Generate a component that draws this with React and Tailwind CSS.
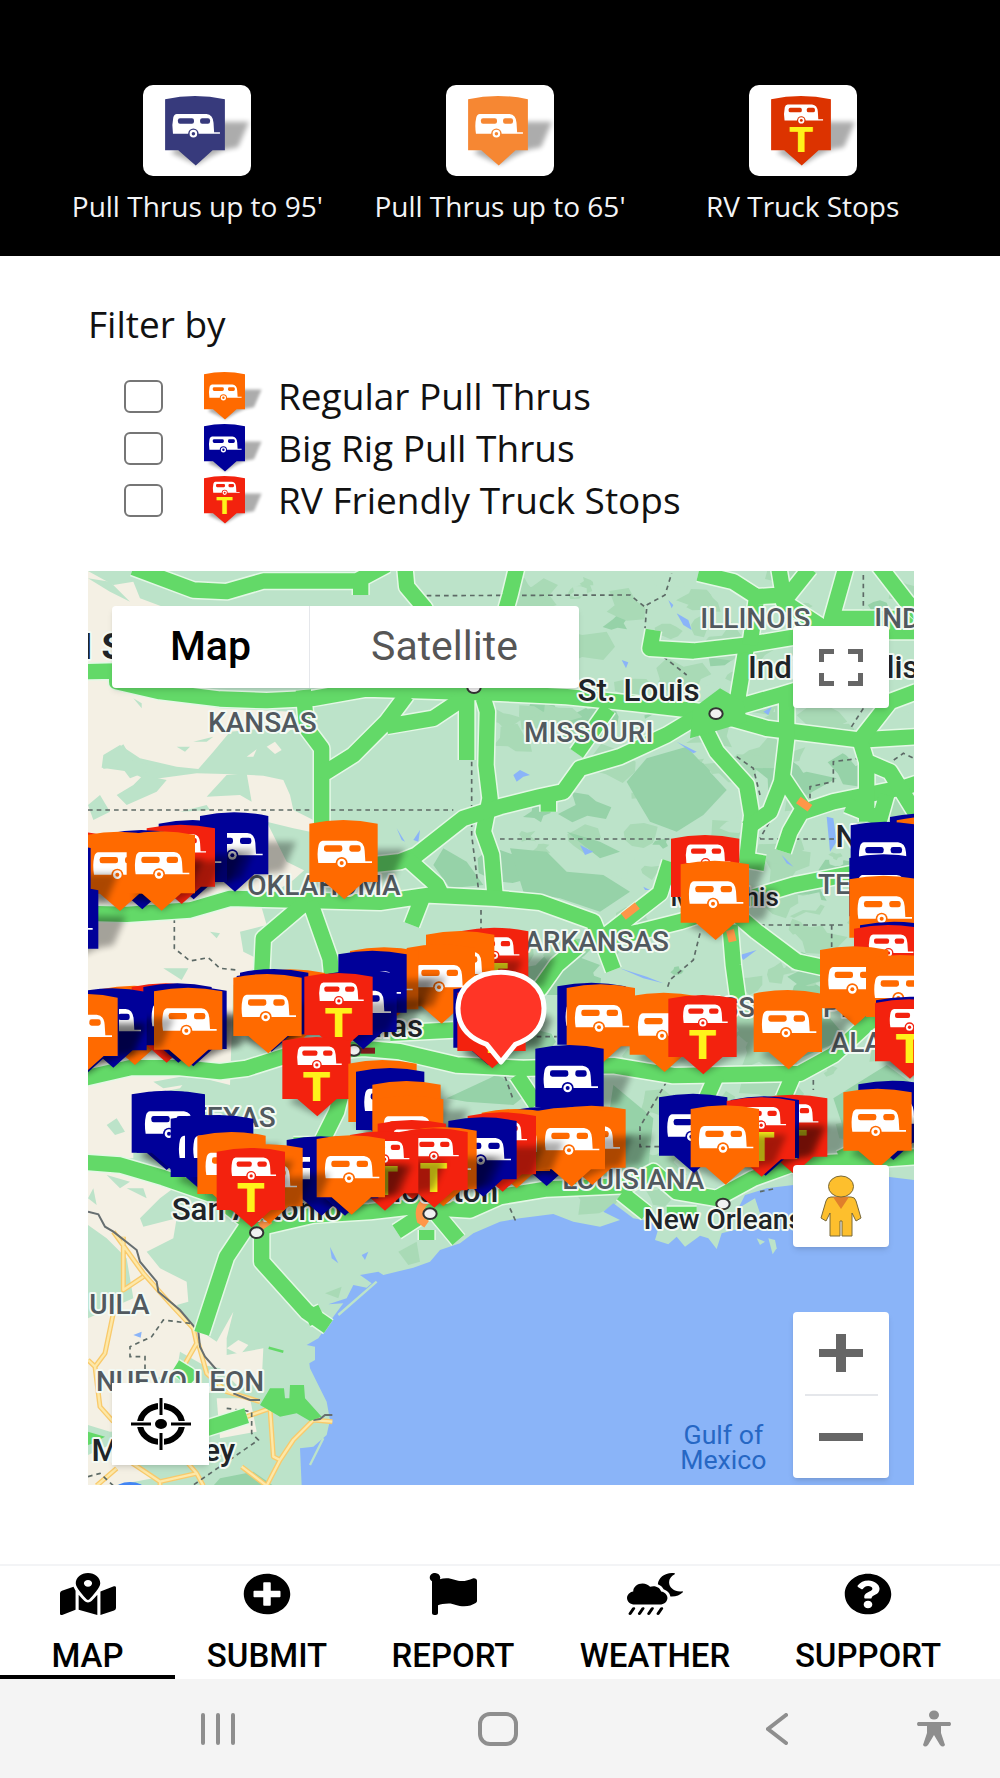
import React from 'react';
import { FaMapMarkedAlt, FaPlusCircle, FaFlag, FaCloudMoonRain, FaQuestionCircle } from 'react-icons/fa';

const COLORS = { O: '#ff6a00', B: '#000099', R: '#f3220e' };

function Camper({ color }) {
  return (
    <g>
      <path d="M40 62H142Q164 64 166 92L168 124H188V129H27Q22 100 28 74Q31 63 40 62Z" fill="#fff" />
      <rect x="44" y="76" width="55" height="19" rx="7" fill={color} />
      <rect x="120" y="76" width="34" height="19" rx="7" fill={color} />
      <circle cx="97" cy="129" r="18" fill={color} />
      <circle cx="97" cy="129" r="13" fill="#fff" />
      <circle cx="97" cy="129" r="6" fill={color} />
    </g>
  );
}

function Marker({ type, x = 0, y = 0, color }) {
  const fill = color || COLORS[type];
  return (
    <g transform={`translate(${x} ${y})`}>
      <path d="M150 88H288L250 176L205 184L160 205L108 236L20 195Z" fill="#000" opacity="0.32" filter="url(#soft)" />
      <path d="M0 11Q102 -11 205 11V186H163L105 238L45 186H0Z" fill={fill} />
      {type === 'R' ? (
        <>
          <g transform="translate(24 -22) scale(.82)">
            <Camper color={fill} />
          </g>
          <text x="103" y="192" textAnchor="middle" fill="#fff21a" className="font-['DejaVu_Sans'] text-[118px] font-bold">
            T
          </text>
        </>
      ) : (
        <Camper color={fill} />
      )}
    </g>
  );
}

function MarkerIcon({ type, color, className }) {
  return (
    <svg viewBox="0 0 205 240" className={className} overflow="visible" aria-hidden="true">
      <Marker type={type} color={color} />
    </svg>
  );
}

const MARKERS = [
  ['R', -150, 797], ['B', 360, 742], ['B', 236, 765], ['R', 200, 779], ['B', 82, 795], ['O', 15, 800], ['O', 140, 799],
  ['B', -173, 838], ['B', -150, 965], ['O', 688, 765],
  ['R', 1773, 810], ['O', 1802, 887],
  ['B', 2430, 745], ['O', 2450, 755], ['B', 2312, 770], ['B', 2308, 868], ['O', 2308, 932], ['B', 2340, 1070],
  ['R', 2322, 1080], ['O', 2220, 1144], ['O', 2358, 1170], ['B', 2388, 1295], ['R', 2385, 1303],
  ['O', 60, 1262], ['R', 155, 1255], ['B', 190, 1255], ['B', 235, 1266], ['O', 222, 1268], ['B', -5, 1270], ['B', -88, 1290], ['O', -92, 1287],
  ['O', 530, 1213], ['B', 480, 1212], ['B', 470, 1222], ['O', 460, 1227],
  ['R', 1140, 1088], ['O', 1038, 1098], ['O', 980, 1138], ['O', 810, 1147], ['B', 775, 1157], ['B', 745, 1215],
  ['R', 673, 1224], ['R', 607, 1416],
  ['O', 805, 1485], ['B', 828, 1509], ['O', 877, 1548], ['O', 885, 1592],
  ['B', 1120, 1262], ['R', 1132, 1272],
  ['B', 1432, 1253], ['O', 1460, 1258], ['O', 1649, 1283], ['R', 1765, 1290], ['O', 2021, 1275],
  ['B', 1366, 1440], ['B', 1295, 1625], ['O', 1205, 1632], ['O', 1432, 1622], ['O', 1370, 1627],
  ['R', 1163, 1642], ['B', 1105, 1657], ['R', 893, 1665],
  ['O', 985, 1686], ['R', 958, 1690], ['R', 810, 1699], ['B', 620, 1714], ['B', 690, 1714], ['O', 710, 1711],
  ['B', 155, 1577], ['B', 170, 1577], ['B', 272, 1650], ['B', 315, 1650], ['O', 463, 1738], ['O', 352, 1701], ['R', 410, 1749],
  ['B', 1737, 1586], ['R', 2037, 1589], ['B', 1952, 1594], ['R', 1940, 1597], ['O', 1832, 1621],
  ['B', 2335, 1547], ['O', 2290, 1571],
];

const BEIGE = [
  '24,18 100,60 160,50 180,100 260,130 150,140 110,330 230,390 420,430 640,440 660,470 620,505 560,490 450,500 400,560 355,612 290,605 180,580 120,540 70,570 65,608 150,620 200,645 350,625 460,628 550,632 610,645 630,690 640,735 700,765 690,830 690,900 640,945 540,1010 560,1080 480,1100 490,1160 530,1180 520,1210 460,1260 450,1560 330,1530 300,1570 200,1590 160,1600 160,1780 24,1780 24,18',
  '24,1815 120,1810 200,1850 300,1855 240,1900 180,1960 190,1985 290,1960 280,2020 200,2060 240,2110 320,2150 325,2210 290,2220 350,2290 410,2330 460,2240 440,2320 440,2370 550,2350 545,2450 480,2470 420,2410 370,2400 300,2360 290,2420 230,2440 200,2500 250,2590 90,2600 24,2580 24,2260 160,2200 140,2080 80,2020 24,1980',
  '440,2350 475,2325 505,2340 480,2370', '24,2670 90,2640 220,2740 100,2762 24,2762', '410,2500 510,2500 530,2600 420,2620',
  '560,545 585,530 605,555 585,567', '500,575 530,553 520,575', '1690,1600 1720,1590 1735,1605', '1645,1690 1675,1665 1685,1695',
];

const PATCHES = [
  '160,400 185,415 185,430', '70,580 130,538 160,590 240,605 150,640 120,600 70,612', '340,530 400,515 380,530', '290,545 330,545 315,560',
  '190,630 260,645 230,680 140,720 110,690 160,660', '440,630 500,625 515,710 480,690 380,695', '24,720 60,690 90,740 40,765',
  '300,740 380,720 390,735', '560,770 640,790 690,800 690,925 620,890', '250,1210 325,1210 305,1245', '80,1680 110,1660 135,1700 105,1710',
  '24,40 90,50 150,110 90,80', '80,1830 150,1850 120,1870', '220,1550 330,1530 310,1560 250,1570', '390,1100 420,1105 410,1120',
  '140,1870 190,1870 200,1900', '40,1870 50,1920 24,1900',
];

const DARK = [
  '1640,650 1700,580 1820,545 1940,675 1870,750 1790,800 1710,770 1680,720',
  '1290,850 1400,860 1460,920 1570,930 1650,980 1560,1040 1440,1000 1330,980',
  '1460,800 1560,830 1620,860 1560,880', '1090,850 1160,890 1210,960 1110,970 1060,900',
  '1860,1640 1880,1560 1840,1600', '2180,690 2120,640 2180,620 2270,640', '1250,1530 1350,1580 1300,1620 1160,1610 1100,1600',
  '2260,1600 2420,1500 2502,1560 2502,1700 2300,1720', '2100,1380 2200,1300 2300,1420 2160,1480', '420,2740 520,2720 580,2762 400,2762',
  '1480,1170 1560,1200 1480,1290 1400,1290', '1600,1560 1720,1660 1700,1850 1560,1830',
];

function blotches() {
  let seed = 7;
  const rnd = () => {
    seed = (seed * 16807) % 2147483647;
    return seed / 2147483647;
  };
  return Array.from({ length: 230 }, (_, i) => {
    const cx = 1240 + rnd() * 1270;
    const cy = 20 + rnd() * 1950;
    const size = 18 + rnd() * 62;
    const points = Array.from({ length: 9 }, (_, k) => {
      const a = (k / 9) * Math.PI * 2;
      const r = size * (0.35 + rnd() * 0.8);
      return `${Math.round(cx + Math.cos(a) * r * 1.2)},${Math.round(cy + Math.sin(a) * r * 0.8)}`;
    });
    return { points: points.join(' '), fill: ['#a9dab6', '#a9dab6', '#a9dab6', '#bce3c9', '#96d2a8'][i % 5] };
  });
}
const BLOTCHES = blotches();

const LAKES = [
  '1300,630 1320,615 1350,630 1330,635 1310,650', '1790,530 1850,560 1840,565', '1765,105 1780,120 1775,130', '1790,145 1825,165 1835,195 1810,180',
  '1625,285 1645,292 1638,310', '2050,440 2075,425 2065,450', '2240,755 2260,760 2270,830 2250,860', '2105,870 2140,905 2120,895',
  '1500,840 1540,860 1515,870', '1690,965 1710,975 1695,975', '950,790 975,830 965,825', '1000,825 1020,795 1015,830', '1980,1170 2030,1155 1990,1185',
  '750,2045 775,2095 755,2080', '845,2070 865,2060 855,2085', '160,2310 185,2300 182,2318', '1905,1870 1935,1860 1925,1885', '1620,1210 1700,1235 1750,1255 1690,1240',
];

const ROADS = [
  'M160 8L340 75L440 80L550 48H830L920 0M842 50V90', 'M974 0L980 65L1035 130V200', 'M1312 0L1290 90L1270 160',
  'M10 320L110 318V350L240 380L420 402L560 407L700 400L860 372L1260 385L1460 395L1660 415L1830 435L1900 445',
  'M670 375L680 490L725 550V780', 'M980 390L920 470L820 570L740 620L718 612M1150 400L1060 460L920 484',
  'M1160 400V585M1210 400L1222 440L1218 600L1230 700L1210 800L1235 870L1245 990',
  'M870 900L960 890L1010 870L1150 760L1260 725L1380 695L1450 680L1500 610L1620 575L1760 510L1860 450M1405 690V740',
  'M10 1045L140 1048L330 1035L450 1000L640 1005L900 1012L1050 990L1250 1000L1380 1012L1540 1070L1560 1120M980 880L1070 960L1090 1000M1030 990L995 1080',
  'M680 1010L550 1120L545 1230L480 1260M690 1010L750 1180L758 1260',
  'M1560 1125L1740 985L1770 890M1560 1125L1680 1100L1800 1070L2040 990L2140 960L2320 925',
  'M1585 430L1490 565', 'M1860 460L1910 560L2000 660L2015 750L2000 885L2055 895',
  'M1880 450L1960 430L2100 390L2200 360M1900 445L2060 490L2340 525L2510 515M1970 420L2000 240',
  'M1720 195L1710 250L1840 258L2000 240L2240 200L2510 200',
  'M1855 25L1960 50L2030 95L2010 240M2095 0L2110 90L2030 95M2190 10L2110 110L2240 195M2300 0L2255 160H2460L2510 205M2395 0L2480 110L2520 150',
  'M2120 380V520L2105 650L2070 740L2000 790M2110 640L2170 730L2130 800L2110 860M2170 740L2260 710L2480 665L2510 655',
  'M2360 770V590L2340 525L2430 410L2510 380M2360 590L2430 620L2510 750M2300 720L2400 760L2420 690',
  'M1560 1110L1600 1215M1500 1140L1430 1200L1380 1270L1330 1310', 'M1950 1080L1960 1200L1975 1310', 'M1960 1040L2030 1100L2150 1190L2250 1212',
  'M10 1540L150 1508L300 1508L420 1520L500 1510L620 1472L850 1450L960 1460L1130 1500L1330 1510L1600 1502L1780 1532L2160 1525L2260 1470L2370 1370L2510 1330',
  'M930 1405L1120 1395', 'M790 1560L770 1640L720 1740L640 1740', 'M10 1792L120 1800L250 1838L400 1890L530 1990L700 1950L870 1940L1000 1925L1170 1935L1260 1895L1400 1872L1640 1862L1720 1820L1790 1880L1910 1900L2020 1840L2130 1800L2290 1790L2510 1775',
  'M1625 1885L1700 1945', 'M1910 1530L1870 1620M2140 1530L2110 1600M1310 1530L1370 1620', 'M1760 1948H1850M2280 1780L2400 1720',
  'M500 1985L440 2075L365 2305M545 2000V2090L680 2240L745 2285M680 2262L725 2240', 'M1050 1935L950 2000M1060 1935L1135 2025M1040 1995V2025',
  'M380 2590L500 2552', 'M285 2405L325 2430L305 2450',
];

const YELLOW =
  'M100 2000L190 2125L270 2215L340 2290L350 2335L310 2405M130 2015V2175L190 2135M100 2245L75 2365L45 2405L60 2525L100 2570M24 2385L45 2405M355 2335L380 2425L440 2480L540 2510M500 2555L570 2530L580 2675L600 2685L640 2625L700 2565L757 2570M600 2685L560 2762L485 2705M240 2750L350 2725L370 2762M150 2690L240 2750V2762M50 2762L110 2710M320 2690L350 2725';

const DASHES =
  'M24 735H1120M283 1060V1150L330 1188L385 1178L420 1210L470 1215M1175 590V810L1195 970M1040 92L1650 90L1700 130L1695 190M1700 120L1755 90L1775 25M1750 275L1820 330M1260 822H1773M2040 822H2300M2350 30V150M1970 575L2020 610L2040 690M2080 750L2040 820M2350 430L2305 500M2190 700V665L2260 650V590L2340 580M1203 1035V1100M1860 1105L1840 1185L1770 1245L1760 1275M2040 1080H2300M2255 1080V1150M1760 1550L1680 1685V1745H1740M1370 1415H1430M1275 1535L1300 1605M2200 1545V1575M1290 1930L1310 1975M2040 1880L2090 1870M330 2275L250 2265L215 2315L150 2345V2375H195V2420M440 2530L515 2540V2605L535 2625L340 2760M24 2735L60 2725L100 2762M2420 600L2470 565L2502 580';

const LABELS = [
  ['KANSAS', 547, 500], ['OKLAHOMA', 732, 990], ['MISSOURI', 1526, 530], ['ILLINOIS', 2026, 188], ['INDIANA', 2550, 188], ['ARKANSAS', 1550, 1158],
  ['TENNESSEE', 2445, 988], ['MISSISSIPPI', 2066, 1355], ['ALABAMA', 2450, 1461], ['TEXAS', 458, 1687], ['LOUISIANA', 1660, 1872], ['NUEVO LEON', 300, 2477],
];
const CITIES = [
  ['St. Louis', 1676, 409, 'text-[94px]'], ['Indianapolis', 2260, 339, 'text-[94px]'], ['Memphis', 1934, 1024, 'text-[78px]'], ['Nashville', 2460, 846, 'text-[94px]'],
  ['San Antonio', 530, 1964, 'text-[94px]'], ['Houston', 1076, 1912, 'text-[94px]'], ['New Orleans', 1930, 1993, 'text-[84px]'], ['Monterrey', 250, 2688, 'text-[94px]'],
  ['Dallas', 900, 1415, 'text-[94px]'],
];
const DOTS = [[1908, 446], [1182, 368], [530, 2003], [1050, 1946], [1929, 1917], [822, 1456]];

function MapCanvas() {
  return (
    <svg viewBox="24 18 2478 2742" preserveAspectRatio="xMidYMid slice" className="block h-full w-full font-[Roboto]" role="img" aria-label="Map of pull thrus and RV truck stops">
      <defs>
        <filter id="soft" x="-30%" y="-30%" width="160%" height="160%">
          <feGaussianBlur stdDeviation="9" />
        </filter>
      </defs>
      <rect x="0" y="0" width="2520" height="2780" fill="#bce3c9" />
      {BEIGE.map((p) => <polygon key={p} points={p} fill="#f4f0e4" />)}
      {PATCHES.map((p) => <polygon key={p} points={p} fill="#bce3c9" />)}
      {BLOTCHES.map((b, i) => <polygon key={i} points={b.points} fill={b.fill} />)}
      {DARK.map((p) => <polygon key={p} points={p} fill="#96d2a8" />)}
      <polygon points="955,2060 1010,2030 1020,2090 985,2100" fill="#a9dab6" />
      <polygon points="735,2185 785,2165 775,2200" fill="#a9dab6" />
      <polygon
        fill="#8ab4f8"
        points="665,2762 660,2650 700,2645 740,2610 750,2565 740,2510 710,2450 690,2410 688,2395 705,2385 705,2345 680,2340 715,2320 760,2255 790,2215 745,2218 800,2200 820,2160 860,2168 875,2155 840,2130 895,2120 910,2130 1000,2108 1050,2090 1080,2055 1140,2035 1180,2005 1260,1970 1320,1960 1420,1947 1480,1970 1560,1985 1620,1965 1570,1940 1600,1915 1660,1960 1740,1975 1725,2025 1765,2038 1790,2015 1815,2045 1860,2012 1885,2020 1910,2052 1925,2005 2000,1985 2040,1945 2025,1900 1975,1930 1995,1890 2060,1870 2140,1860 2290,1850 2380,1830 2502,1845 2520,2780"
      />
      {LAKES.map((p) => <polygon key={p} points={p} fill="#8ab4f8" />)}
      <polygon points="2030,2020 2055,2030 2040,2040" fill="#bce3c9" />
      <polygon points="2065,2020 2085,2025 2090,2050 2078,2068" fill="#bce3c9" />
      <path d="M775 2250L890 2150M690 2700L730 2620" stroke="#bce3c9" strokeWidth="7" fill="none" />
      <path d={YELLOW} fill="none" stroke="#f9ca6b" strokeWidth="15" strokeLinejoin="round" />
      <path d={YELLOW} fill="none" stroke="#fde8a8" strokeWidth="7" strokeLinejoin="round" />
      <path d={DASHES} fill="none" stroke="#5d6a66" strokeWidth="5" strokeDasharray="14 12" />
      <path d="M24 1940L55 1948L75 1985L100 2000L170 2055L180 2090L230 2150L235 2180L300 2235L355 2300L360 2345L375 2375L410 2415M460 2485L510 2505H540M700 2565L720 2562L735 2550H757" fill="none" stroke="#666e70" strokeWidth="6" />
      <g fill="none" strokeLinejoin="round" strokeLinecap="butt">
        {ROADS.map((d) => <path key={d} d={d} stroke="#e3f8e5" strokeWidth="55" />)}
        {ROADS.map((d) => <path key={d} d={d} stroke="#63d968" strokeWidth="46" />)}
      </g>
      <polygon points="1840,430 1920,370 1990,410 2000,470 1900,500 1830,520" fill="#63d968" />
      <polygon points="540,2520 570,2470 612,2470 615,2500 628,2500 630,2460 672,2460 675,2500 725,2555 690,2568 650,2545 600,2555" fill="#63d968" />
      <polygon points="24,2600 75,2615 40,2635 24,2640" fill="#63d968" />
      <path d="M566 2348L610 2360" stroke="#63d968" strokeWidth="8" />
      <g stroke="#ff9648" strokeWidth="24" fill="none">
        <path d="M1630 1055L1672 1022M1950 1095L1958 1130M2155 705L2190 730M540 1985L570 1965" />
        <path d="M1050 1900Q1010 1920 1022 1965L1040 1978" />
      </g>
      <rect x="843" y="1448" width="42" height="18" fill="#7c1d1d" />
      {DOTS.map(([x, y]) => <ellipse key={`${x}-${y}`} cx={x} cy={y} rx="20" ry="16" fill="#f1f1f1" stroke="#333" strokeWidth="6" />)}
      <g stroke="#f3faf4" strokeWidth="12" strokeLinejoin="round" paintOrder="stroke" textAnchor="middle">
        <g fill="#51595f" className="text-[84px] font-medium">
          {LABELS.map(([t, x, y]) => <text key={t} x={x} y={y}>{t}</text>)}
          <text x="28" y="2247" textAnchor="start">UILA</text>
        </g>
        <g fill="#202428">
          {CITIES.map(([t, x, y, size]) => <text key={t} x={x} y={y} className={`${size} font-medium`}>{t}</text>)}
          <text x="5" y="282" textAnchor="start" className="text-[110px] font-bold">I S</text>
        </g>
      </g>
      <g fill="#2667c4" textAnchor="middle" className="text-[80px]">
        <text x="1930" y="2637">Gulf of</text>
        <text x="1930" y="2712">Mexico</text>
      </g>
      <ellipse cx="150" cy="2775" rx="45" ry="24" fill="#4285f4" />
      {MARKERS.map(([t, x, y], i) => <Marker key={i} type={t} x={x} y={y} />)}
      <path d="M1263 1491L1220 1438Q1134 1408 1134 1330C1134 1264 1190 1222 1263 1222S1392 1264 1392 1330Q1392 1408 1306 1438Z" fill="#ff3526" stroke="#fff" strokeWidth="15" strokeLinejoin="round" />
    </svg>
  );
}

function Legend({ type, color, children }) {
  return (
    <figure className="flex flex-col items-center">
      <div className="flex h-[91px] w-[108px] items-center justify-center rounded-[10px] bg-white">
        <MarkerIcon type={type} color={color} className="mr-1 h-[70px] w-[60px]" />
      </div>
      <figcaption className="mt-3 text-[28px] leading-9 whitespace-nowrap text-gray-100">{children}</figcaption>
    </figure>
  );
}

const FILTERS = [['O', 'Regular Pull Thrus'], ['B', 'Big Rig Pull Thrus'], ['R', 'RV Friendly Truck Stops']];

const TABS = [
  ['MAP', FaMapMarkedAlt, 'w-14'], ['SUBMIT', FaPlusCircle, 'w-12'], ['REPORT', FaFlag, 'w-12'],
  ['WEATHER', FaCloudMoonRain, 'w-14'], ['SUPPORT', FaQuestionCircle, 'w-12'],
];

const CONTROL = 'flex h-[82px] w-24 items-center justify-center rounded bg-white shadow-md';

export default function App() {
  return (
    <div className="flex min-h-screen flex-col bg-white font-['Open_Sans',sans-serif] text-[#111]">
      <header className="grid h-64 grid-cols-3 bg-black px-[46px] pt-[85px]">
        <Legend type="B" color="#373a7c">Pull Thrus up to 95'</Legend>
        <Legend type="O" color="#f68733">Pull Thrus up to 65'</Legend>
        <Legend type="R" color="#dc3300">RV Truck Stops</Legend>
      </header>

      <main className="flex-1 pt-11 pr-[86px] pl-[88px]">
        <fieldset>
          <legend className="float-left w-full text-[37px] leading-[48px]">Filter by</legend>
          <div className="clear-both pt-[22px] pl-9">
            {FILTERS.map(([type, label]) => (
              <label key={type} className="flex h-[52px] items-center">
                <input type="checkbox" className="h-[33px] w-[39px] shrink-0 appearance-none rounded-md border-2 border-[#767676] bg-white checked:bg-[#0b57d0]" />
                <MarkerIcon type={type} className="mr-8 ml-10 h-12 w-[43px] shrink-0" />
                <span className="text-[37px] leading-[52px] whitespace-nowrap">{label}</span>
              </label>
            ))}
          </div>
        </fieldset>

        <section className="relative mt-[45px] h-[914px] overflow-hidden" aria-label="Map">
          <MapCanvas />
          <div className="absolute top-[35px] left-6 flex h-[82px] w-[467px] rounded bg-white font-[Roboto] text-[41px] shadow-md">
            <button type="button" className="w-[198px] border-r border-gray-200 font-medium text-black">Map</button>
            <button type="button" className="flex-1 text-[#565656]">Satellite</button>
          </div>
          <button type="button" aria-label="Toggle fullscreen" className={`${CONTROL} absolute top-[55px] right-[25px]`}>
            <svg viewBox="0 0 44 37" className="h-[37px] w-11" fill="none" stroke="#666" strokeWidth="5">
              <path d="M2.5 13V2.5H15M29 2.5H41.500V13M41.500 24V34.500H29M15 34.500H2.500V24" />
            </svg>
          </button>
          <button type="button" aria-label="Street View" className={`${CONTROL} absolute right-[25px] bottom-[238px]`}>
            <svg viewBox="0 0 42 62" className="h-[62px] w-[42px]" fill="#fdbf2d" stroke="#77683a" strokeWidth="1">
              <path d="M11 22H31Q35 22 36 26L41 43L36 46L32 38V61H22V46H20V61H10V38L6 46L1 43L6 26Q7 22 11 22Z" />
              <path d="M13 22H29L21 34Z" fill="#e07f2b" stroke="none" />
              <ellipse cx="21" cy="11.500" rx="12.500" ry="10.500" />
            </svg>
          </button>
          <div className="absolute right-[25px] bottom-[7px] flex w-24 flex-col items-center rounded bg-white shadow-md">
            <button type="button" aria-label="Zoom in" className="flex h-[82px] w-full items-center justify-center">
              <svg viewBox="0 0 44 38" className="h-[38px] w-11" stroke="#666"><path d="M0 19H44" strokeWidth="8" /><path d="M22 0V38" strokeWidth="10" /></svg>
            </button>
            <div className="h-0.5 w-[73px] bg-gray-200" />
            <button type="button" aria-label="Zoom out" className="flex h-[82px] w-full items-center justify-center">
              <svg viewBox="0 0 44 38" className="h-[38px] w-11" stroke="#666"><path d="M0 19H44" strokeWidth="8" /></svg>
            </button>
          </div>
          <button type="button" aria-label="Find my location" className="absolute bottom-5 left-6 flex h-[82px] w-[97px] items-center justify-center bg-white shadow-md">
            <svg viewBox="0 0 60 52" className="h-[52px] w-[60px]" fill="none" stroke="#000">
              <ellipse cx="30" cy="26" rx="21" ry="18" strokeWidth="6" />
              <path d="M30 0V17M30 35V52M0 26H20M40 26H60" stroke="#fff" strokeWidth="6" />
              <path d="M30 0V17M30 35V52M0 26H20M40 26H60" strokeWidth="3" />
              <ellipse cx="30" cy="26" rx="6" ry="5" fill="#000" stroke="none" />
            </svg>
          </button>
        </section>
      </main>

      <nav className="grid h-[115px] grid-cols-[175fr_184fr_188fr_216fr_210fr_27fr] border-t-2 border-gray-100 font-[Roboto]">
        {TABS.map(([label, Icon, width], i) => (
          <a key={label} href={`#${label.toLowerCase()}`} aria-current={i === 0 ? 'page' : undefined} className={`flex flex-col items-center border-b-4 pt-[7px] text-black ${i === 0 ? 'border-black' : 'border-transparent'}`}>
            <Icon preserveAspectRatio="none" className={`h-[42px] ${width}`} />
            <span className="mt-[23px] text-[33px] leading-9 font-medium">{label}</span>
          </a>
        ))}
      </nav>

      <footer className="grid h-[99px] grid-cols-[436fr_124fr_436fr_4fr] bg-[#f4f4f4] text-[#8e8e8e]">
        <button type="button" aria-label="Recent apps" className="flex items-center justify-center">
          <svg viewBox="0 0 36 32" className="h-8 w-9" stroke="currentColor" strokeWidth="4" strokeLinecap="round"><path d="M3 2V30M18 2V30M33 2V30" /></svg>
        </button>
        <button type="button" aria-label="Home" className="flex items-center justify-center">
          <svg viewBox="0 0 40 34" className="h-[34px] w-10" fill="none" stroke="currentColor" strokeWidth="4"><rect x="2" y="2" width="36" height="30" rx="10" /></svg>
        </button>
        <div className="flex items-center justify-end gap-32 pr-11">
          <button type="button" aria-label="Back">
            <svg viewBox="0 0 22 32" className="h-8 w-[22px]" fill="none" stroke="currentColor" strokeWidth="4" strokeLinecap="round"><path d="M20 2L2 16L20 30" /></svg>
          </button>
          <button type="button" aria-label="Accessibility">
            <svg viewBox="0 0 36 37" className="h-[37px] w-9" fill="currentColor"><ellipse cx="18" cy="5" rx="5" ry="4.500" /><path d="M2 12H34Q36 14 34 16H25V23L29 35Q27 38 24 35L18 25L12 35Q9 38 7 35L11 23V16H2Q0 14 2 12Z" /></svg>
          </button>
        </div>
      </footer>
    </div>
  );
}
